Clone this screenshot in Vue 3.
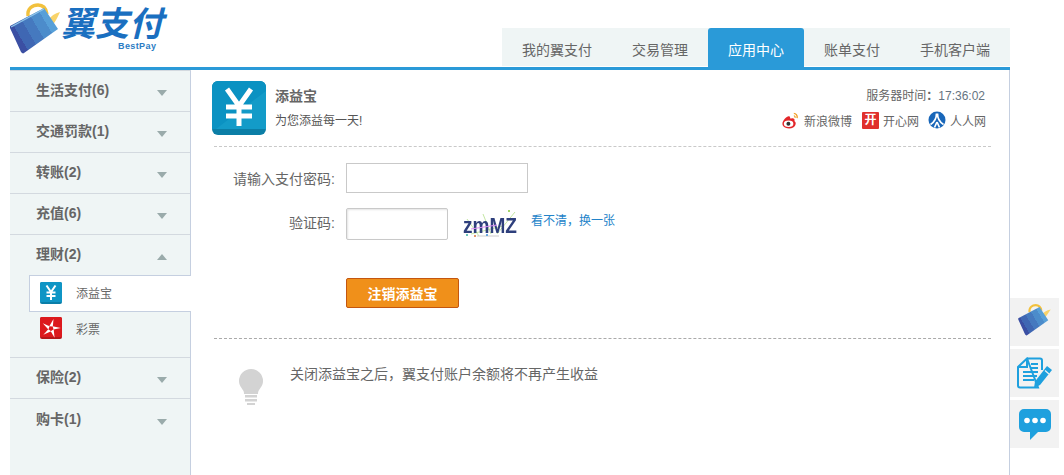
<script setup>
const tabs = [
  { name: '我的翼支付' },
  { name: '交易管理' },
  { name: '应用中心', active: true },
  { name: '账单支付' },
  { name: '手机客户端' }
]
const topMenu = ['生活支付(6)', '交通罚款(1)', '转账(2)', '充值(6)']
const bottomMenu = ['保险(2)', '购卡(1)']
const blades = [0, 72, 144, 216, 288]
</script>

<template>
  <div class="page">
    <header class="header">
      <div class="logo">
        <svg class="wallet" viewBox="0 0 60 56" width="60" height="56">
          <defs>
            <linearGradient id="stripes" gradientUnits="userSpaceOnUse" x1="10" y1="39" x2="52" y2="14">
              <stop offset="0" stop-color="#3b4fa3" />
              <stop offset="0.2" stop-color="#3b4fa3" />
              <stop offset="0.2" stop-color="#3f67b3" />
              <stop offset="0.4" stop-color="#3f67b3" />
              <stop offset="0.4" stop-color="#4579bf" />
              <stop offset="0.6" stop-color="#4579bf" />
              <stop offset="0.6" stop-color="#4c8ccb" />
              <stop offset="0.8" stop-color="#4c8ccb" />
              <stop offset="0.8" stop-color="#579fd8" />
              <stop offset="1" stop-color="#579fd8" />
            </linearGradient>
          </defs>
          <path d="M28 16C27 8 33 5 38 5c5 0 8 3 9 9" fill="none" stroke="#f2c13d" stroke-width="3.4" />
          <path d="M47 21c4-5 8-8 13-9-2 4-4 9-8 14z" fill="#f8d36a" />
          <path d="M10 26 44 8l14 21-34 24c-1 1-2 0-3-1L10 28z" fill="url(#stripes)" />
          <path d="M11 27 44 9" stroke="#8fc4ea" stroke-width="1.4" fill="none" />
        </svg>
        <span class="logo-cn">翼支付</span>
        <span class="logo-en">BestPay</span>
      </div>
      <nav class="tabs">
        <a v-for="t in tabs" :key="t.name" class="tab" :class="{ active: t.active }">{{ t.name }}</a>
      </nav>
    </header>

    <div class="body">
      <aside class="side">
        <div v-for="m in topMenu" :key="m" class="row">
          <span>{{ m }}</span><i class="down"></i>
        </div>
        <div class="row open">
          <span>理财(2)</span><i class="up"></i>
        </div>
        <div class="sub">
          <div class="item selected">
            <svg viewBox="0 0 22 22" width="22" height="22">
              <rect width="22" height="22" rx="2" fill="#0a7ea8" />
              <path d="M0 2a2 2 0 0 1 2-2h18a2 2 0 0 1 2 2v18H0z" fill="#0f95c5" />
              <path d="M6.5 3.5 11 10l4.500-6.500M11 10v8M6.500 10.500h9M6.500 14h9" fill="none" stroke="#fff" stroke-width="2" />
            </svg>
            <span>添益宝</span>
          </div>
          <div class="item">
            <svg viewBox="0 0 22 22" width="22" height="22">
              <rect width="22" height="22" rx="2" fill="#b5161a" />
              <path d="M0 2a2 2 0 0 1 2-2h18a2 2 0 0 1 2 2v18H0z" fill="#dc191d" />
              <path
                v-for="a in blades"
                :key="a"
                d="M13.500 2 9.300 9.300 12.800 9.400z"
                fill="#fff"
                :transform="`rotate(${a} 11 11.500)`"
              />
            </svg>
            <span>彩票</span>
          </div>
        </div>
        <div v-for="m in bottomMenu" :key="m" class="row">
          <span>{{ m }}</span><i class="down"></i>
        </div>
      </aside>

      <main class="main">
        <section class="head">
          <svg viewBox="0 0 54 54" width="54" height="54">
            <rect width="54" height="54" rx="6" fill="#0b7ea6" />
            <path d="M0 6a6 6 0 0 1 6-6h42a6 6 0 0 1 6 6v42H0z" fill="#0b92c2" />
            <path d="M54 10v38H4z" fill="#179fcb" opacity="0.7" />
            <path d="M15 8 27 25 39 8M27 25v20M14 26h26M14 35h26" fill="none" stroke="#fff" stroke-width="5" />
          </svg>
          <div class="title">
            <strong>添益宝</strong>
            <span>为您添益每一天!</span>
          </div>
          <div class="aside">
            <div class="time"><span>服务器时间<b>&#xFF1A;</b></span><em>17:36:02</em></div>
            <div class="share">
              <a>
                <svg viewBox="0 0 20 20" width="19" height="19">
                  <path d="M13.500 2.500c2 0 4 2 3.500 5" fill="none" stroke="#f2a12a" stroke-width="1.500" />
                  <path d="M13.500 5c1 0 1.500 1 1.300 2.300" fill="none" stroke="#f2a12a" stroke-width="1.300" />
                  <path d="M8 5.500c2 0 1.500 2.500 2 2.500s3-1 4 .5c.7 1-.2 2 .5 2.500 2 1 1.500 7-6 7.500C4 18.300 1.500 16 1.500 13.500 1.500 10 6 5.500 8 5.500z" fill="#e3262a" />
                  <ellipse cx="8" cy="13.500" rx="5" ry="3.400" fill="#fff" />
                  <circle cx="7.800" cy="13.500" r="2.100" fill="#333" />
                </svg>
                <span>新浪微博</span>
              </a>
              <a>
                <span class="kx">开</span>
                <span>开心网</span>
              </a>
              <a>
                <svg viewBox="0 0 18 18" width="18" height="18">
                  <circle cx="9" cy="9" r="8.500" fill="#1866b9" />
                  <path d="M8.500 2.500C8.500 7 6.500 11 2.500 13.500M9.500 2.500c0 4.500 2 8.500 6 11M9 11l-2.500 5.500M9 11l2.500 5.500" fill="none" stroke="#fff" stroke-width="1.700" />
                </svg>
                <span>人人网</span>
              </a>
            </div>
          </div>
        </section>

        <section class="form">
          <div class="field">
            <label>请输入支付密码:</label>
            <input class="pwd" type="password" />
          </div>
          <div class="field code">
            <label>验证码:</label>
            <input class="captcha-input" type="text" />
            <svg class="captcha" viewBox="0 0 58 32" width="58" height="32">
              <path d="M6 11 18 28M22 6l8 20M36 26 54 4M10 26 42 18" stroke="#b5e08c" stroke-width="0.8" fill="none" />
              <text class="cap-text" transform="translate(2 25) scale(1.120 1.350)">zmMZ</text>
              <path d="M10 21 36 17" stroke="#d78cf0" stroke-width="1.200" fill="none" />
              <path d="M16 28h22" stroke="#ccc" stroke-width="1" />
              <circle cx="6" cy="27" r="1" fill="#3ab0a0" /><circle cx="14" cy="28" r="1" fill="#d9743a" /><circle cx="26" cy="27" r="1" fill="#3a8fd9" /><circle cx="48" cy="3" r="1" fill="#86c93a" />
            </svg>
            <a class="refresh">看不清&#xFF0C;换一张</a>
          </div>
          <button class="cancel" type="button">注销添益宝</button>
        </section>

        <section class="note">
          <svg viewBox="0 0 24 36" width="24" height="36">
            <path d="M12 0a12 12 0 0 1 12 12c0 5-3 7-4.500 10-.5 1-.5 2-.5 3H5c0-1 0-2-.5-3C3 19 0 17 0 12A12 12 0 0 1 12 0z" fill="#d3d3d3" />
            <path d="M6 26h12v2.500H6zM6 30h12v2.500H6zM8 34h8v2H8z" fill="#d3d3d3" />
          </svg>
          <p>关闭添益宝之后&#xFF0C;翼支付账户余额将不再产生收益</p>
        </section>
      </main>
    </div>

    <div class="floats">
      <a class="float">
        <svg class="mini-wallet" viewBox="0 0 60 56" width="37.500" height="35">
          <path d="M28 16C27 8 33 5 38 5c5 0 8 3 9 9" fill="none" stroke="#f2c13d" stroke-width="3.400" />
          <path d="M47 21c4-5 8-8 15-9-3 4-6 9-10 14z" fill="#f8d36a" />
          <path d="M10 26 44 8l14 21-34 24c-1 1-2 0-3-1L10 28z" fill="url(#stripes)" />
        </svg>
      </a>
      <a class="float">
        <svg viewBox="0 0 36 32" width="36" height="32">
          <path d="M10 1.500h13a2 2 0 0 1 2 2V13M21 30.500H3a2 2 0 0 1-2-2V10l9-8.500z" fill="none" stroke="#1ea0de" stroke-width="2" />
          <path d="M10 2v8H1" fill="none" stroke="#1ea0de" stroke-width="2" />
          <path d="M14 7h7M14 11h7M6 15h15M6 19h14M6 23h11" stroke="#1ea0de" stroke-width="2" />
          <path d="M30 9 35 13 23 28l-6 3 1-6.500z" fill="#1ea0de" />
          <path d="M28 13.500 32 17" stroke="#f2f2f2" stroke-width="1.200" />
        </svg>
      </a>
      <a class="float">
        <svg viewBox="0 0 34 32" width="34" height="32">
          <path d="M6 1h22a5 5 0 0 1 5 5v13a5 5 0 0 1-5 5h-8l-8 8v-8H6a5 5 0 0 1-5-5V6a5 5 0 0 1 5-5z" fill="#1ea0de" />
          <circle cx="9" cy="12.500" r="2.800" fill="#fff" /><circle cx="17" cy="12.500" r="2.800" fill="#fff" /><circle cx="25" cy="12.500" r="2.800" fill="#fff" />
        </svg>
      </a>
    </div>
  </div>
</template>

<style scoped>
.page {
  position: relative;
  width: 1064px;
  height: 475px;
  overflow: hidden;
  background: #fff;
  color: #666;
  font-family: "Liberation Sans", "Noto Sans CJK SC", sans-serif;
  font-size: 12px;
}
a { text-decoration: none; color: inherit; }

.header {
  width: 1000px;
  height: 67px;
  margin-left: 10px;
  display: flex;
  justify-content: space-between;
  align-items: flex-end;
}
.logo { position: relative; width: 160px; height: 56px; align-self: flex-start; }
.wallet { display: block; margin-left: -10px; overflow: visible; }
.logo-cn {
  position: absolute;
  left: 51px;
  top: 8px;
  font-size: 34px;
  line-height: 33px;
  font-weight: 700;
  font-style: italic;
  color: #1a6fc0;
  white-space: nowrap;
}
.logo-en {
  position: absolute;
  left: 108px;
  top: 41px;
  font-size: 9px;
  line-height: 10px;
  font-weight: 700;
  color: #2b7cc4;
  letter-spacing: 0.4px;
}

.tabs {
  display: flex;
  height: 39px;
  background: linear-gradient(#eff5f5, #eff5f5) no-repeat 0 0 / 100% 38px;
}
.tab {
  height: 39px;
  padding: 0 20px;
  font-size: 14px;
  line-height: 44px;
  color: #666;
  white-space: nowrap;
}
.tab.active {
  background: #2a9ad8;
  color: #fff;
  border-radius: 3px 3px 0 0;
}

.body {
  width: 1000px;
  height: 408px;
  margin-left: 10px;
  border-top: 3px solid #2a9ad8;
  box-sizing: border-box;
  display: flex;
}

.side {
  width: 181px;
  flex: none;
  box-sizing: border-box;
  background: #eff5f5;
  border-right: 1px solid #c5cfe0;
  border-top: 1px solid #d3d9df;
}
.row {
  height: 41px;
  box-sizing: border-box;
  padding: 0 23px 4px 26px;
  display: flex;
  align-items: center;
  justify-content: space-between;
  border-bottom: 1px solid #d3d9df;
  font-size: 14px;
  font-weight: 700;
  color: #666;
}
.row.open { height: 40px; border-bottom: 0; }
.row:last-child { border-bottom: 0; }
.down, .up { width: 0; height: 0; border-left: 5px solid transparent; border-right: 5px solid transparent; margin-top: 8px; }
.down { border-top: 6px solid #9aabab; }
.up { border-bottom: 6px solid #9aabab; }

.sub {
  height: 83px;
  box-sizing: border-box;
  border-bottom: 1px solid #d3d9df;
  padding-left: 19px;
}
.item {
  position: relative;
  height: 32px;
  box-sizing: border-box;
  display: flex;
  align-items: center;
  gap: 14px;
  padding-left: 11px;
  color: #666;
}
.item.selected {
  height: 37px;
  margin-right: -1px;
  padding: 0 0 2px 10px;
  background: #fff;
  border: 1px solid #c5cfe0;
  border-right: 0;
}

.main {
  flex: 1;
  box-sizing: border-box;
  padding: 0 18px 0 23px;
  border-right: 1px solid #c5cfe0;
  min-width: 0;
}
.head {
  height: 77px;
  box-sizing: border-box;
  padding: 11px 6px 0 0;
  display: flex;
  align-items: flex-start;
  border-bottom: 1px dashed #c9c9c9;
}
.head > svg { margin-left: -2px; flex: none; }
.title { margin-left: 9px; display: flex; flex-direction: column; }
.title strong { font-size: 14px; line-height: 20px; margin-top: 5px; color: #666; }
.title span { font-size: 12px; line-height: 18px; margin-top: 6px; color: #555; }
.aside { margin-left: auto; text-align: right; }
.time { font-size: 12px; line-height: 18px; margin-top: 6px; }
.time b { font-weight: 700; }
.time em { font-style: normal; color: #667482; }
.share { display: flex; justify-content: flex-end; align-items: center; gap: 9px; margin: 5px -1px 0 0; height: 20px; }
.share a { display: flex; align-items: center; gap: 4px; white-space: nowrap; }
.share a:first-child { margin-right: 1px; }
.kx {
  width: 17px;
  height: 17px;
  background: #e0302c;
  color: #fff;
  font-size: 12px;
  font-weight: 700;
  line-height: 17px;
  text-align: center;
  border-radius: 1px;
}

.form {
  height: 192px;
  box-sizing: border-box;
  padding-top: 16px;
  border-bottom: 1px dashed #aaa;
}
.field { display: flex; align-items: center; margin-bottom: 15px; }
.field label { width: 121px; margin-right: 11px; text-align: right; font-size: 14px; color: #666; }
.pwd {
  width: 182px;
  height: 30px;
  box-sizing: border-box;
  border: 1px solid #c9c9c9;
  background: #fff;
  outline: 0;
  padding: 0;
}
.captcha-input {
  width: 102px;
  height: 32px;
  box-sizing: border-box;
  border: 1px solid #c9c9c9;
  border-radius: 2px;
  box-shadow: inset 1px 1px 2px #e4e4e4;
  background: #fff;
  outline: 0;
  padding: 0;
}
.code { align-items: flex-start; margin-bottom: 38px; }
.code label { margin-top: 4px; }
.captcha { margin-left: 13px; flex: none; filter: blur(0.4px); }
.cap-text { font: 700 17px "Liberation Sans", sans-serif; fill: #2e3f7c; }
.refresh { margin: 4px 0 0 12px; color: #2383c9; font-size: 12px; line-height: 18px; white-space: nowrap; }
.cancel {
  display: block;
  width: 113px;
  height: 30px;
  margin-left: 132px;
  padding: 0;
  background: #f0901a;
  border: 1px solid #c4560f;
  border-radius: 2px;
  color: #fff;
  font-family: inherit;
  font-size: 14px;
  font-weight: 700;
}

.note {
  display: flex;
  align-items: flex-start;
  gap: 27px;
  padding: 30px 0 0 25px;
}
.note p { margin: -5px 0 0; font-size: 14px; line-height: 20px; color: #666; }

.floats {
  position: absolute;
  left: 1010px;
  top: 298px;
  display: flex;
  flex-direction: column;
  gap: 3px;
}
.float {
  width: 49px;
  height: 48px;
  background: #f2f2f2;
  display: flex;
  align-items: center;
  justify-content: center;
}
.mini-wallet { overflow: visible; margin: 0 7px 5px 0; }
</style>
